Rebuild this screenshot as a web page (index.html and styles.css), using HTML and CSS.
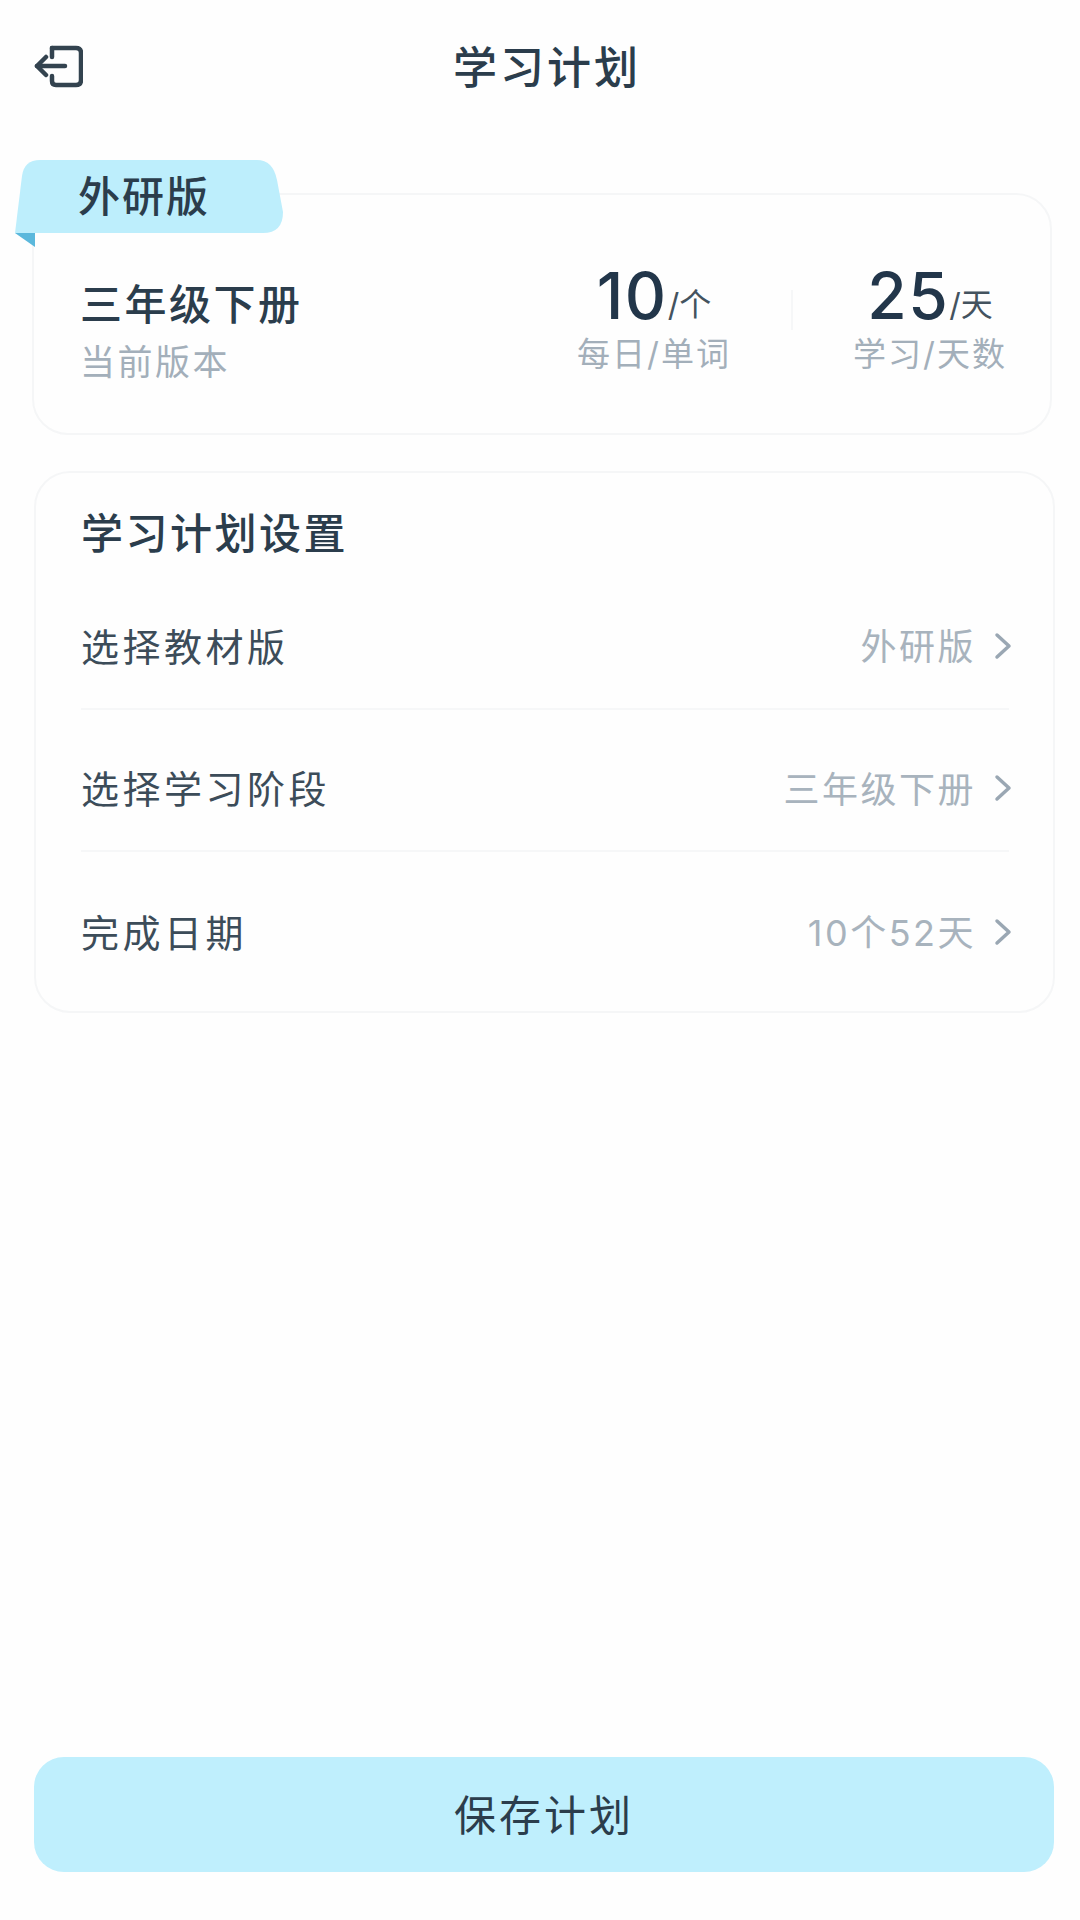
FILE: index.html
```html
<html>
    <head>
        <title>学习计划</title>
        <meta name="viewport" content="width=device-width, initial-scale=1.0">
        <link rel="stylesheet" href="styles.css">
    </head>
    <body>
        <div class="page">
            <div class="topbar">
                <svg class="back" viewBox="0 0 49 43" fill="none" stroke="#33434f" stroke-width="4.5" stroke-linecap="round" stroke-linejoin="round">
                    <path d="M18 3 H42 Q47 3 47 8 V35 Q47 40 42 40 H22 Q18 40 18 36 V31"/>
                    <path d="M18 3 V12"/>
                    <path d="M3 21 H31"/>
                    <path d="M12 12 L3 21 L12 30"/>
                </svg>
                <h1 class="title">学习计划</h1>
            </div>

            <div class="card current">
                <div class="tag">
                    <svg class="tag-shape" viewBox="0 0 268 87">
                        <path d="M0 73 L7 16 Q9 0 25 0 H242 Q258 0 262 20 L268 52 Q268 73 248 73 Z" fill="#bdeefc"/>
                        <path d="M0 73 H20 V87 Z" fill="#5bb8dc"/>
                    </svg>
                    <span class="tag-text">外研版</span>
                </div>
                <div class="book">
                    <div class="book-name">三年级下册</div>
                    <div class="book-sub">当前版本</div>
                </div>
                <div class="stats">
                    <div class="stat">
                        <div class="stat-value"><span class="num">10</span><span class="unit">/个</span></div>
                        <div class="stat-label">每日/单词</div>
                    </div>
                    <div class="stat-line"></div>
                    <div class="stat">
                        <div class="stat-value"><span class="num">25</span><span class="unit">/天</span></div>
                        <div class="stat-label">学习/天数</div>
                    </div>
                </div>
            </div>

            <div class="card settings">
                <h2 class="settings-title">学习计划设置</h2>
                <div class="row">
                    <span class="row-name">选择教材版</span>
                    <span class="row-value">外研版</span>
                    <svg class="chevron" viewBox="0 0 18 28" fill="none" stroke="#9aa7b3" stroke-width="3.5" stroke-linecap="round" stroke-linejoin="round"><path d="M3 3 L15 14 L3 25"/></svg>
                </div>
                <div class="row">
                    <span class="row-name">选择学习阶段</span>
                    <span class="row-value">三年级下册</span>
                    <svg class="chevron" viewBox="0 0 18 28" fill="none" stroke="#9aa7b3" stroke-width="3.5" stroke-linecap="round" stroke-linejoin="round"><path d="M3 3 L15 14 L3 25"/></svg>
                </div>
                <div class="row">
                    <span class="row-name">完成日期</span>
                    <span class="row-value">10个52天</span>
                    <svg class="chevron" viewBox="0 0 18 28" fill="none" stroke="#9aa7b3" stroke-width="3.5" stroke-linecap="round" stroke-linejoin="round"><path d="M3 3 L15 14 L3 25"/></svg>
                </div>
            </div>

            <button class="save">保存计划</button>
        </div>
    </body>
</html>
```

FILE: styles.css
```css
html {
    background-color: #fefefe;
}
body {
    margin: 0;
    font-family: "Inter", "Noto Sans CJK SC", sans-serif;
    color: #2b3d4c;
}
.page {
    display: flex;
    flex-direction: column;
    height: 1920px;
    box-sizing: border-box;
    padding-bottom: 48px;
}
.topbar {
    display: flex;
    align-items: center;
    justify-content: center;
    position: relative;
    height: 132px;
    flex-shrink: 0;
}
.back {
    position: absolute;
    left: 34px;
    top: 45px;
    width: 49px;
    height: 43px;
}
.title {
    margin: 0 0 3px 14px;
    font-size: 44px;
    font-weight: 500;
    letter-spacing: 3px;
}
.card {
    box-sizing: border-box;
    background-color: #fefefe;
    border: 2px solid #f5f6f7;
    border-radius: 36px;
}
.current {
    position: relative;
    display: flex;
    align-items: center;
    justify-content: space-between;
    margin: 61px 28px 0 32px;
    height: 242px;
    padding: 0 20px 0 46px;
}
.tag {
    position: absolute;
    left: -19px;
    top: -35px;
    width: 268px;
    height: 87px;
}
.tag-shape {
    position: absolute;
    left: 0;
    top: 0;
    width: 268px;
    height: 87px;
}
.tag-text {
    position: absolute;
    left: 63px;
    top: 9px;
    font-size: 42px;
    line-height: 56px;
    font-weight: 500;
    letter-spacing: 2px;
}
.book-name {
    font-size: 42px;
    line-height: 52px;
    font-weight: 500;
    letter-spacing: 2.5px;
    margin-top: 36px;
}
.book-sub {
    font-size: 35px;
    line-height: 46px;
    color: #a3afba;
    letter-spacing: 2.5px;
    margin-top: 8px;
}
.stats {
    display: flex;
    align-items: center;
    gap: 37px;
}
.stat {
    display: flex;
    flex-direction: column;
    align-items: center;
    width: 200px;
}
.stat-value {
    line-height: 72px;
    white-space: nowrap;
    margin-top: 8px;
    margin-bottom: -9px;
}
.num {
    font-size: 64px;
    font-weight: 500;
    letter-spacing: 1.5px;
    color: #22364a;
}
.unit {
    font-size: 32px;
    color: #44535f;
    vertical-align: 3px;
}
.stat-label {
    font-size: 33px;
    line-height: 44px;
    color: #a3afba;
    letter-spacing: 2px;
    white-space: nowrap;
}
.stat-line {
    width: 2px;
    height: 40px;
    background-color: #f6f7f8;
    margin-bottom: 8px;
}
.settings {
    margin: 36px 25px 0 34px;
    height: 542px;
    padding: 29px 44px 0 45px;
}
.settings-title {
    margin: 0 0 1px;
    font-size: 42px;
    line-height: 64px;
    font-weight: 500;
    letter-spacing: 2.5px;
}
.row {
    display: flex;
    align-items: center;
    height: 142.5px;
    padding-top: 14px;
    border-bottom: 2px solid #f6f7f8;
    box-sizing: border-box;
    font-size: 38px;
}
.row:last-child {
    border-bottom: none;
}
.row-name {
    flex: 1;
    color: #3c4c59;
    letter-spacing: 3.5px;
}
.row-value {
    color: #a8b3bd;
    font-size: 36px;
    letter-spacing: 2.5px;
}
.chevron {
    width: 18px;
    height: 28px;
    margin-left: 18px;
    margin-right: -3px;
    margin-top: 3px;
}
.save {
    display: block;
    margin: auto 26px 0 34px;
    height: 115px;
    padding: 0 0 4px;
    border: none;
    border-radius: 30px;
    background-color: #bfeffd;
    color: #2b3d4c;
    font-family: "Noto Sans CJK SC", sans-serif;
    font-size: 42px;
    letter-spacing: 3px;
}
```
